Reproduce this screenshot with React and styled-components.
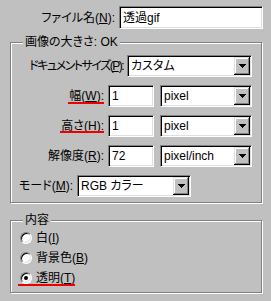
import React from 'react'
import styled, { createGlobalStyle } from 'styled-components'

const GlobalStyle = createGlobalStyle`
  html, body {
    margin: 0;
    padding: 0;
    background: #c0c0c0;
  }
`

const Dialog = styled.div`
  width: 271px;
  height: 301px;
  box-sizing: border-box;
  padding-top: 6px;
  display: flex;
  flex-direction: column;
  background: #c0c0c0;
  color: #000;
  font-family: "Liberation Sans", "Noto Sans CJK JP", sans-serif;
  font-size: 12px;
  line-height: 14px;
  font-feature-settings: "palt";
`

const FileRow = styled.div`
  display: flex;
  align-items: center;
  justify-content: flex-end;
  gap: 4px;
  padding-right: 8px;
`

const Group = styled.div`
  position: relative;
  margin: ${(p) => p.$top}px 9px 0 10px;
  padding: ${(p) => p.$pad};
  display: flex;
  flex-direction: column;
  gap: ${(p) => p.$gap}px;
  border: 1px solid #808080;
  box-shadow: inset 1px 1px 0 #fff, 1px 1px 0 #fff;
`

const Legend = styled.span`
  position: absolute;
  top: -8px;
  left: 12px;
  padding: 0 2px;
  background: #c0c0c0;
  white-space: nowrap;
`

const Row = styled.div`
  display: flex;
  align-items: center;
  gap: 4px;
  height: ${(p) => p.$h || 22}px;
`

const Label = styled.span`
  display: flex;
  justify-content: flex-end;
  width: ${(p) => p.$w}px;
  white-space: nowrap;
  letter-spacing: ${(p) => p.$tight || 0}px;
`

const Field = styled.div`
  box-sizing: border-box;
  width: ${(p) => p.$w}px;
  height: ${(p) => p.$h || 22}px;
  margin-left: ${(p) => p.$ml || 0}px;
  padding: 1px;
  display: flex;
  align-items: center;
  background: #fff;
  border: 1px solid;
  border-color: #808080 #fff #fff #808080;
  box-shadow: inset 1px 1px 0 #000, inset -1px -1px 0 #dfdfdf;
  white-space: nowrap;
  overflow: hidden;
`

const Value = styled.span`
  flex: 1;
  padding-left: 2px;
  overflow: hidden;
`

const DropButton = styled.span`
  width: 16px;
  height: 100%;
  display: flex;
  align-items: center;
  justify-content: center;
  background: #c0c0c0;
  box-shadow: inset -1px -1px 0 #000, inset 1px 1px 0 #dfdfdf,
    inset -2px -2px 0 #808080, inset 2px 2px 0 #fff;
`

const Marked = styled.span`
  position: relative;
  display: inline-flex;
  align-items: center;
  gap: 4px;
  &::after {
    content: '';
    position: absolute;
    left: ${(p) => p.$l || 0}px;
    right: ${(p) => p.$r || 0}px;
    bottom: ${(p) => p.$b}px;
    height: 2px;
    background: #ee0000;
  }
`

const Radio = styled.span`
  position: relative;
  box-sizing: border-box;
  width: 12px;
  height: 12px;
  border-radius: 50%;
  background: #fff;
  border: 1px solid;
  border-color: #808080 #fff #fff #808080;
  box-shadow: inset 1px 1px 0 #000, inset -1px -1px 0 #dfdfdf;
  &::after {
    content: '';
    display: ${(p) => (p.$checked ? 'block' : 'none')};
    position: absolute;
    left: 3px;
    top: 3px;
    width: 4px;
    height: 4px;
    border-radius: 50%;
    background: #000;
  }
`

const Arrow = () => (
  <svg width="7" height="4" viewBox="0 0 7 4" shapeRendering="crispEdges">
    <path d="M0 0h7v1H0zM1 1h5v1H1zM2 2h3v1H2zM3 3h1v1H3z" fill="#000" />
  </svg>
)

const Combo = ({ w, ml, children }) => (
  <Field $w={w} $ml={ml}>
    <Value>{children}</Value>
    <DropButton>
      <Arrow />
    </DropButton>
  </Field>
)

const Key = ({ k }) => (
  <>
    (<u>{k}</u>):
  </>
)

export default function App() {
  return (
    <>
      <GlobalStyle />
      <Dialog>
        <FileRow>
          <span>
            ファイル名<Key k="N" />
          </span>
          <Field $w={144} $h={23}>
            <Value>透過gif</Value>
          </Field>
        </FileRow>

        <Group $top={13} $pad="12px 0 5px 14px" $gap={8}>
          <Legend>画像の大きさ: OK</Legend>
          <Row>
            <Label $w={98} $tight={-1.5}>
              ドキュメントサイズ<Key k="P" />
            </Label>
            <Combo w={125}>カスタム</Combo>
          </Row>
          <Row>
            <Label $w={79}>
              <Marked $b={-1} $l={-1}>
                <span>
                  幅<Key k="W" />
                </span>
              </Marked>
            </Label>
            <Field $w={46}>
              <Value>1</Value>
            </Field>
            <Combo w={92} ml={2}>pixel</Combo>
          </Row>
          <Row>
            <Label $w={79}>
              <Marked $b={0} $l={-1}>
                <span>
                  高さ<Key k="H" />
                </span>
              </Marked>
            </Label>
            <Field $w={46}>
              <Value>1</Value>
            </Field>
            <Combo w={92} ml={2}>pixel</Combo>
          </Row>
          <Row>
            <Label $w={79}>
              解像度<Key k="R" />
            </Label>
            <Field $w={46}>
              <Value>72</Value>
            </Field>
            <Combo w={92} ml={2}>pixel/inch</Combo>
          </Row>
          <Row>
            <Label $w={48}>
              モード<Key k="M" />
            </Label>
            <Combo w={114}>RGB カラー</Combo>
          </Row>
        </Group>

        <Group $top={17} $pad="7px 0 4px 9px" $gap={0}>
          <Legend>内容</Legend>
          <Row $h={20}>
            <Radio />
            <span>
              白(<u>I</u>)
            </span>
          </Row>
          <Row $h={20}>
            <Radio />
            <span>
              背景色(<u>B</u>)
            </span>
          </Row>
          <Row $h={20}>
            <Marked $b={-1} $l={-2}>
              <Radio $checked />
              <span>
                透明(<u>T</u>)
              </span>
            </Marked>
          </Row>
        </Group>
      </Dialog>
    </>
  )
}
